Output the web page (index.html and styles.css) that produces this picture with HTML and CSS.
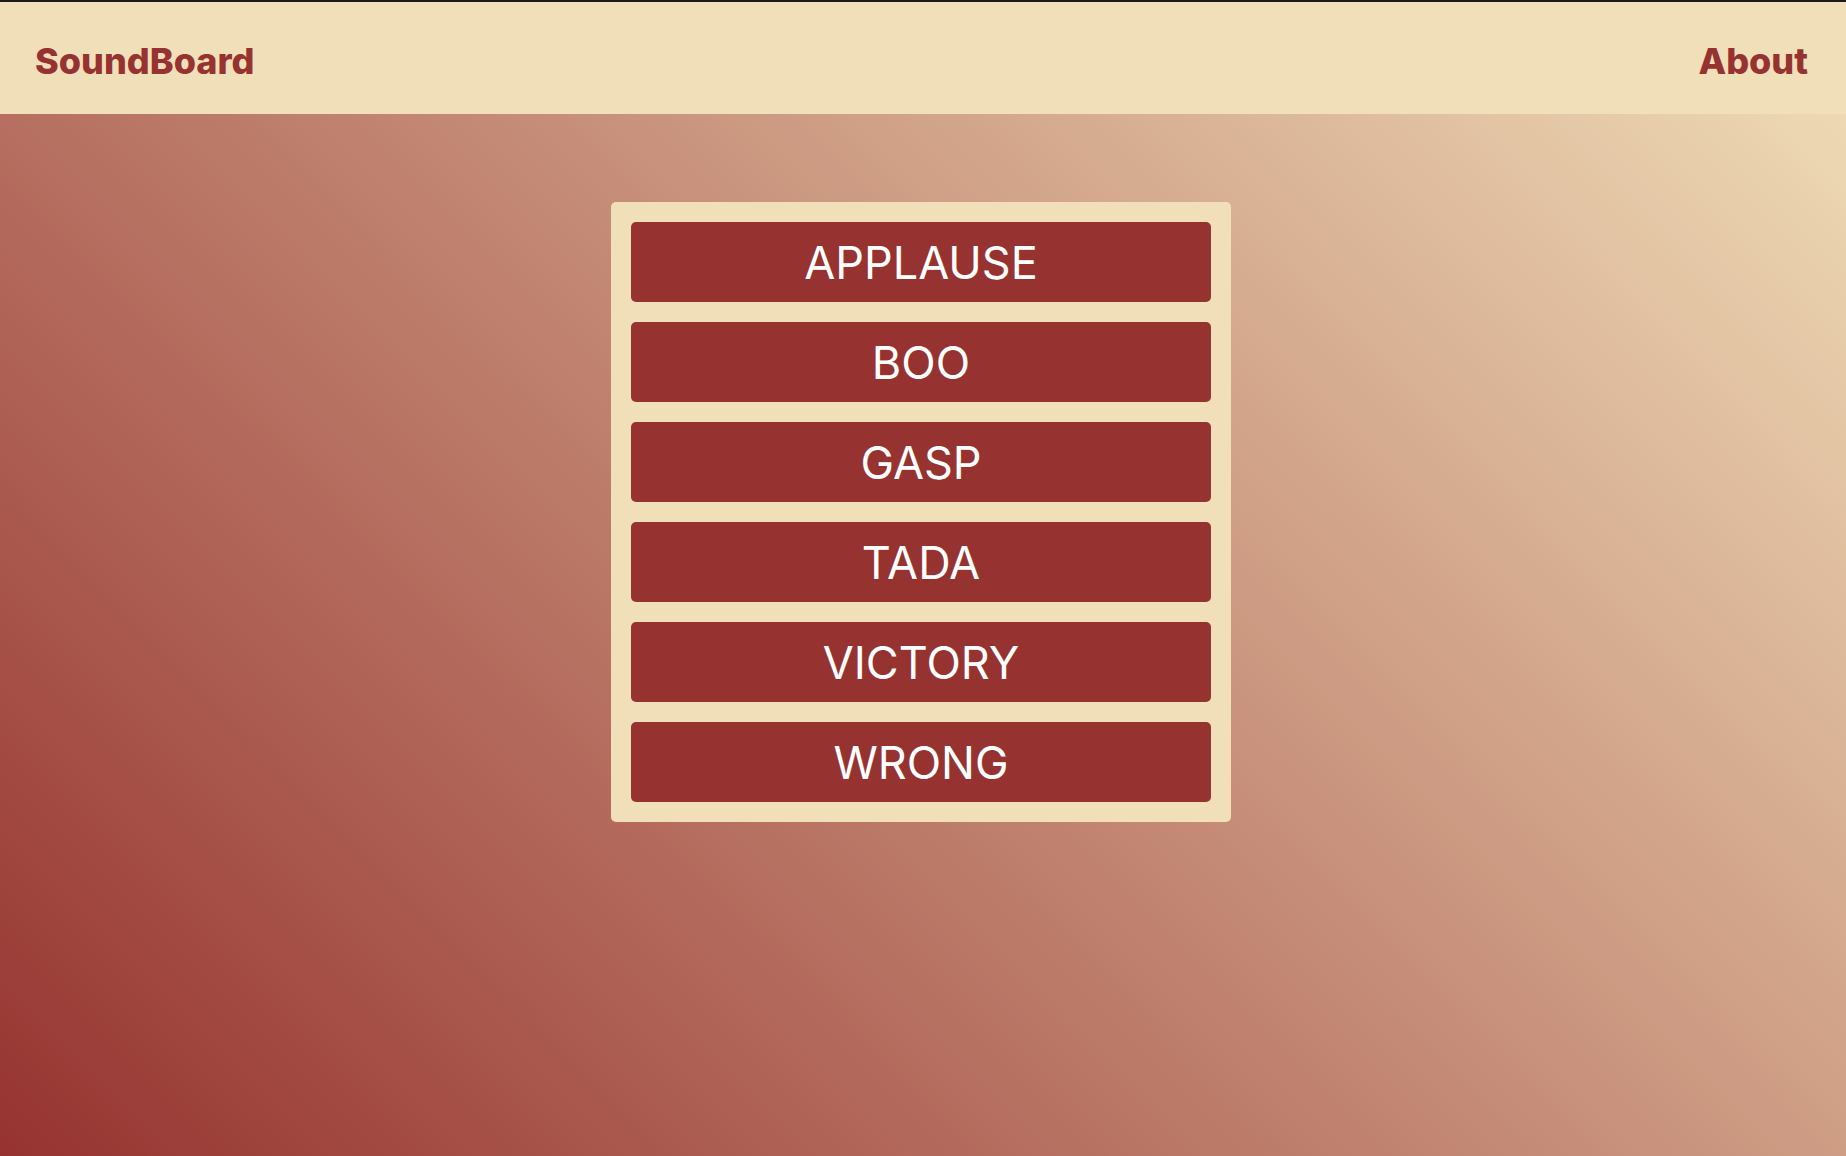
FILE: index.html
```html
<!DOCTYPE html>
<html lang="en">
<head>
<meta charset="utf-8">
<title>SoundBoard</title>
<link rel="stylesheet" href="styles.css">
</head>
<body>
<header class="topbar">
  <a class="brand" href="#">SoundBoard</a>
  <a class="nav-link" href="#">About</a>
</header>
<main class="main">
  <section class="board">
    <button class="sound-btn">APPLAUSE</button>
    <button class="sound-btn">BOO</button>
    <button class="sound-btn">GASP</button>
    <button class="sound-btn">TADA</button>
    <button class="sound-btn">VICTORY</button>
    <button class="sound-btn">WRONG</button>
  </section>
</main>
</body>
</html>
```

FILE: styles.css
```css
html, body {
  margin: 0;
  padding: 0;
  height: 100%;
}
body {
  font-family: Inter, "Noto Sans", sans-serif;
  background: linear-gradient(45deg, #963330, #f1dfb9);
  min-height: 100vh;
  display: flex;
  flex-direction: column;
}
.topbar {
  background: #f1dfb9;
  border-top: 2px solid #1b1b1b;
  display: flex;
  align-items: center;
  justify-content: space-between;
  padding: 6px 38px 0 35px;
  box-sizing: border-box;
  height: 114px;
}
.brand, .nav-link {
  color: #963330;
  font-weight: 800;
  font-size: 36px;
  text-decoration: none;
  line-height: 1;
}
.main {
  flex: 1;
  display: flex;
  justify-content: center;
  align-items: flex-start;
  padding: 88px 4px 0 0;
}
.board {
  background: #f1dfb9;
  border-radius: 5px;
  width: 580px;
  padding: 20px;
  display: flex;
  flex-direction: column;
  gap: 20px;
}
.sound-btn {
  height: 80px;
  background: #963330;
  color: #ffffff;
  border: none;
  border-radius: 5px;
  font-family: Inter, "Noto Sans", sans-serif;
  font-size: 45px;
  font-weight: 400;
  padding: 0;
  cursor: pointer;
}
```
